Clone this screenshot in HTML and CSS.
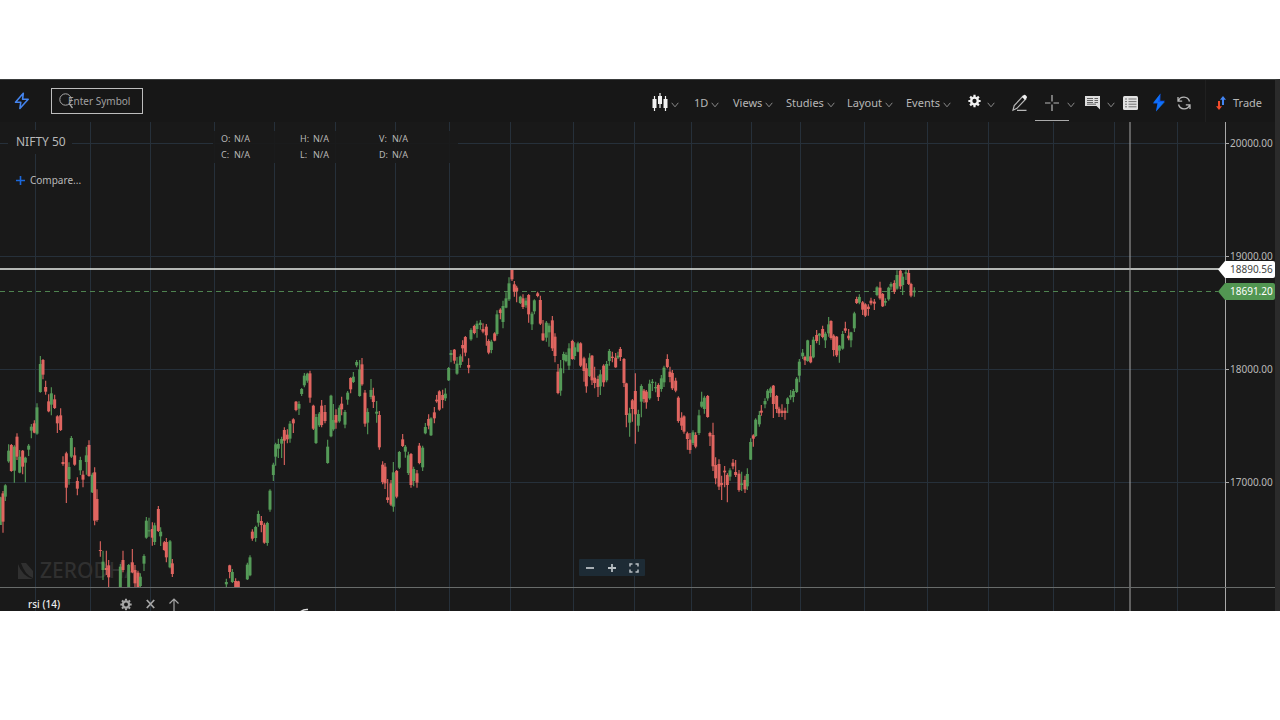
FILE: index.html
```html
<!DOCTYPE html>
<html lang="en">
<head>
<meta charset="utf-8">
<meta name="viewport" content="width=device-width, initial-scale=1">
<title>NIFTY 50 chart</title>
<link rel="stylesheet" href="styles.css">
</head>
<body>
<svg class="symbols" aria-hidden="true">
  <symbol id="chev" viewBox="0 0 8 6"><path d="M.7 .8 4 4.8 7.3 .8" fill="none" stroke="currentColor"/></symbol>
  <symbol id="gear" viewBox="0 0 14 14"><circle cx="7" cy="7" r="3.6" fill="none" stroke="currentColor" stroke-width="2.6"/><path d="M7 .4v2.2M7 11.4v2.2M.4 7h2.2M11.4 7h2.2M2.3 2.3l1.6 1.6M10.1 10.1l1.6 1.6M2.3 11.7l1.6-1.6M10.1 3.9l1.6-1.6" stroke="currentColor" stroke-width="2.4"/></symbol>
</svg>
<main class="app">
  <header class="toolbar">
    <button class="logo" aria-label="Home"><svg width="16" height="18" viewBox="0 0 16 18"><path d="M9.3 1.2 1.5 10.2h5.3l-.9 6.3L14.2 7.3H8.6z" fill="none" stroke="#4484ee" stroke-width="1.6" stroke-linejoin="round"/></svg></button>
    <label class="search">
      <svg width="16" height="18" viewBox="0 0 16 18"><circle cx="6.5" cy="7.5" r="5.7" fill="none" stroke="#aaa"/><path d="m10.5 11.8 3 4.2" stroke="#aaa" stroke-width="1.3"/></svg>
      <input type="text" placeholder="Enter Symbol" aria-label="Enter Symbol">
    </label>
    <nav class="tools">
      <button class="tool" aria-label="Chart style"><svg class="white" width="16" height="20" viewBox="0 0 16 20"><path d="M2.5 3v15M8 0v15M13.5 3v15" stroke="currentColor" stroke-width="1.2"/><path d="M.5 6h4v9h-4zM6 3h4v8H6zM11.5 6h4v9h-4z" fill="currentColor"/></svg><svg class="chev"><use href="#chev"/></svg></button>
      <button class="tool">1D<svg class="chev"><use href="#chev"/></svg></button>
      <button class="tool">Views<svg class="chev"><use href="#chev"/></svg></button>
      <button class="tool">Studies<svg class="chev"><use href="#chev"/></svg></button>
      <button class="tool">Layout<svg class="chev"><use href="#chev"/></svg></button>
      <button class="tool">Events<svg class="chev"><use href="#chev"/></svg></button>
      <button class="tool settings" aria-label="Settings"><svg class="white lifted" width="13" height="14"><use href="#gear"/></svg><svg class="chev"><use href="#chev"/></svg></button>
      <button class="tool" aria-label="Draw"><svg width="16" height="18" viewBox="0 0 16 18"><path d="M1 16.2 2.2 11.6 11 2.2l2.8 2.7-8.9 9.4zM5 16.3h9.5" fill="none" stroke="currentColor" stroke-width="1.2"/><path d="m10 3 1.8-2q.8-.6 1.6.1l1.4 1.5q.5.7-.1 1.4l-1.8 2z" fill="#eee"/></svg></button>
      <button class="tool cross" aria-label="Crosshair"><svg width="14" height="16" viewBox="0 0 14 16"><path d="M0 8h5.5M8.500 8H14M7 0v6.500M7 9.500V16" stroke="currentColor" stroke-width="1.2"/></svg><svg class="chev"><use href="#chev"/></svg></button>
      <button class="tool notes" aria-label="Notes"><svg width="15" height="15" viewBox="0 0 15 15"><path d="M0 1h15v13.500L11.500 11H0z" fill="#ddd"/><path d="M2 3.500h6M2 5.500h6M2 7.500h6M2 9.200h9M9.500 3.500H13M9.500 5.500H13M9.500 7.500H13" stroke="#444" stroke-width=".8"/></svg><svg class="chev"><use href="#chev"/></svg></button>
      <button class="tool" aria-label="Table"><svg width="15" height="14" viewBox="0 0 15 14"><rect width="15" height="14" rx="1.500" fill="#e2e2e2"/><path d="M2 3h2M2 5.600h2M2 8.200h2M2 10.800h2M5.500 3h8M5.500 5.600h8M5.500 8.200h8M5.500 10.800h8" stroke="#666" stroke-width=".9"/></svg></button>
      <button class="tool" aria-label="Signals"><svg width="12" height="19" viewBox="0 0 12 19"><path d="M7.500.5 0 10.500h4.300L3 18.500 12 7.800H7.300z" fill="#0b56ee"/><path d="M7.500.5 5 9h6.900L3 18.500l2-8.800H0z" fill="#1384ff" opacity=".6"/></svg></button>
      <button class="tool" aria-label="Refresh"><svg width="14" height="16" viewBox="0 0 14 16"><path d="M1 2v4.200h4.200M1.300 6A5.900 5.900 0 0 1 12.500 6.500M13 14V9.800H8.800M12.700 10A5.900 5.900 0 0 1 1.500 9.500" fill="none" stroke="currentColor" stroke-width="1.300"/></svg></button>
      <button class="tool trade"><svg width="10" height="14" viewBox="0 0 10 14"><path d="M7 0 10 3.800H8V9H6V3.800H4z" fill="#4385f4"/><path d="M3 14 0 10.200h2V5h2v5.200h2z" fill="#f24b2b"/></svg>Trade</button>
    </nav>
  </header>

  <section class="chart" aria-label="Price chart">
    <svg id="plot" class="plot" viewBox="0 122 1226 465" preserveAspectRatio="xMaxYMin slice">
      <g id="grid" class="grid"></g>
      <g class="mark"><path d="M18 563h8l7 8v7q-8-3-12-15zM18 564q4 12 15 15H18z"/><text x="40" y="578">ZERODHA</text></g>
      <path class="last" d="M0 291.500H1218"/>
      <g id="candles"></g>
      <path class="hair" d="M0 269H1219"/>
      <path class="hair vertical" d="M1130 122V587"/>
    </svg>
    <div class="title">
      <h1>NIFTY 50</h1>
      <button class="compare"><svg width="9" height="9" viewBox="0 0 9 9"><path d="M4.500 0v9M0 4.500h9" stroke="#1b68dc" stroke-width="1.600"/></svg>Compare...</button>
    </div>
    <dl class="quote">
      <div><dt>O:</dt><dd>N/A</dd></div><div><dt>H:</dt><dd>N/A</dd></div><div><dt>V:</dt><dd>N/A</dd></div>
      <div><dt>C:</dt><dd>N/A</dd></div><div><dt>L:</dt><dd>N/A</dd></div><div><dt>D:</dt><dd>N/A</dd></div>
    </dl>
    <div class="zoom">
      <button aria-label="Zoom out"><svg width="10" height="10"><path d="M1 5h8" stroke="currentColor" stroke-width="1.800"/></svg></button>
      <button aria-label="Zoom in"><svg width="10" height="10"><path d="M1 5h8M5 1v8" stroke="currentColor" stroke-width="1.800"/></svg></button>
      <button aria-label="Full screen"><svg width="10" height="10"><path d="M1 3.500V1h2.500M6.500 1H9v2.500M9 6.500V9H6.500M3.500 9H1V6.500" fill="none" stroke="currentColor" stroke-width="1.500"/></svg></button>
    </div>
    <div class="axis">
      <span>20000.00</span><span>19000.00</span><span>18000.00</span><span>17000.00</span>
    </div>
    <div class="tag cursor">18890.56</div>
    <div class="tag price">18691.20</div>
  </section>

  <section class="study" aria-label="RSI">
    <svg class="plot" viewBox="0 587 1226 23" preserveAspectRatio="xMaxYMin slice">
      <g id="grid2" class="grid"></g>
      <path class="hair vertical" d="M1130 587V611"/>
      <path d="M300 611q4-3 8-2.500" fill="none" stroke="#ddd" stroke-width="1.500"/>
    </svg>
    <div class="study-head">
      <h2>rsi (14)</h2>
      <button aria-label="Study settings"><svg width="12" height="13"><use href="#gear"/></svg></button>
      <button aria-label="Remove study"><svg width="9" height="10"><path d="m.8 1 7.400 8M8.200 1 .8 9" stroke="currentColor" stroke-width="1.800"/></svg></button>
      <button aria-label="Move study up"><svg width="10" height="13"><path d="M5 13V1M.5 5.500 5 1l4.500 4.500" fill="none" stroke="currentColor" stroke-width="1.200"/></svg></button>
    </div>
    <div class="axis"></div>
  </section>
</main>
<script src="chart.js"></script>
</body>
</html>
```
FILE: styles.css
```css
* { box-sizing: border-box; }
body {
  margin: 0;
  background: #fff;
  color: #b8b8b8;
  font: 11px/16px "Noto Sans", "Open Sans", sans-serif;
}
button {
  padding: 0;
  border: 0;
  background: none;
  color: inherit;
  font: inherit;
}
svg { display: block; flex: none; }
h1, h2, dl, dd { margin: 0; font-weight: 400; }
.symbols { position: absolute; width: 0; height: 0; }
.app {
  margin-top: 79px;
  background: #191919;
  border-top: 1px solid #3a3d3c;
  border-right: 5px solid #2b2b2b;
  overflow: hidden;
}
.toolbar {
  display: flex;
  align-items: center;
  height: 42px;
  padding: 0 14px;
  background: #171717;
}
.search {
  position: relative;
  margin-left: 21px;
}
.search svg { position: absolute; left: 8px; top: 4px; }
.search input {
  display: block;
  width: 92px;
  height: 26px;
  padding: 0 0 0 16px;
  border: 1px solid #bdbdbd;
  border-radius: 0;
  background: transparent;
  color: #a0a0a0;
  font: 10px/16px "Noto Sans", sans-serif;
}
.search input::placeholder { color: #a0a0a0; opacity: 1; }
.tools {
  display: grid;
  grid-template-columns: 42px 39px 53px 61px 59px 62px 44px 23px 50px 38px 30px 24px 28px 56px;
  align-self: stretch;
  margin-left: auto;
}
.tool {
  display: flex;
  align-items: center;
  gap: 3px;
  padding-top: 3px;
  white-space: nowrap;
}
.chev { width: 8px; height: 6px; margin-top: 5px; color: #888; }
.white { color: #f2f2f2; }
.lifted { margin-bottom: 4px; }
.settings { gap: 6px; }
.notes { gap: 7px; }
.cross {
  position: relative;
  gap: 8px;
  padding-left: 10px;
}
.cross::after {
  content: "";
  position: absolute;
  left: 0;
  bottom: 1px;
  width: 34px;
  height: 1px;
  background: #aaa;
}
.trade {
  gap: 7px;
  padding-left: 10px;
  border-left: 1px solid #202020;
}
.chart, .study {
  position: relative;
  display: grid;
  grid-template-columns: 1fr 50px;
}
.chart { height: 465px; }
.study { height: 24px; border-top: 1px solid #686b6a; }
.plot { width: calc(100% + 1px); height: 100%; min-width: 0; overflow: hidden; }
.grid path { stroke: #26303a; fill: none; }
.mark { fill: #303030; font: 500 21px "Noto Sans", sans-serif; }
.last { stroke: #4f8350; stroke-dasharray: 5 4; }
.hair { stroke: #e8ece8; stroke-width: 1.5; }
.vertical { stroke: #a8a8a8; stroke-width: 1; }
.up { stroke: #559b58; }
.down { stroke: #e06560; }
.wick { stroke-width: 1.1; }
.stem { stroke-width: 3; }
.title {
  position: absolute;
  left: 8px;
  top: 8px;
}
.title h1 {
  width: 64px;
  padding: 2px 0 2px 8px;
  background: #191919;
  font-size: 12px;
  line-height: 20px;
  white-space: nowrap;
}
.compare {
  display: flex;
  align-items: center;
  gap: 5px;
  padding: 18px 8px 0;
  font-size: 10px;
  line-height: 16px;
}
.quote {
  position: absolute;
  left: 213px;
  top: 9px;
  display: grid;
  grid-template-columns: repeat(3, 79px);
  padding-left: 8px;
  background: rgba(25, 25, 25, .9);
  font-size: 9px;
  line-height: 16px;
}
.quote div { display: flex; }
.quote dt { width: 13px; }
.zoom {
  position: absolute;
  left: calc(50% - 59px);
  bottom: 11px;
  display: grid;
  grid-template-columns: repeat(3, 22px);
  height: 17px;
  border-radius: 1px;
  background: #1d2b35;
  color: #b7bec2;
}
.zoom button { display: grid; place-items: center; }
.axis {
  border-left: 1px solid #a8a8a8;
  padding-top: 13px;
  font-size: 10px;
}
.axis span {
  display: flex;
  align-items: center;
  gap: 1px;
  height: 16px;
  margin-bottom: 97px;
}
.axis span::before { content: ""; width: 3px; height: 1px; background: #a8a8a8; }
.tag {
  position: absolute;
  right: 0;
  width: 57px;
  height: 17px;
  padding-left: 12px;
  border-radius: 2px;
  clip-path: polygon(0 50%, 7px 0, 100% 0, 100% 100%, 7px 100%);
  font-size: 10px;
  line-height: 17px;
}
.cursor { top: 139px; background: #fff; color: #444; }
.price { top: 161px; background: #529652; color: #fff; }
.study .axis { padding: 0; }
.study-head {
  position: absolute;
  left: 28px;
  top: 8px;
  display: grid;
  grid-template-columns: 92px 26px 23px 10px;
  color: #a6a6a6;
}
.study-head h2 { color: #eee; font-size: 10px; line-height: 16px; font-weight: 500; }
.study-head button { align-self: start; height: 16px; display: flex; align-items: center; }
```
FILE: chart.js
```js
// Vertical grid lines and price lines, in chart units.
const columns = [35, 90, 150, 214, 274, 335, 395, 449, 510, 573, 634, 691, 751, 800, 864, 927, 988, 1053, 1114, 1177];
const rows = [143, 256, 369, 482];
const vertical = columns.map(x => `M${x + 0.5} 122V611`).join('');
const horizontal = rows.map(y => `M0 ${y + 0.5}H1226`).join('');
document.getElementById('grid').innerHTML = `<path d="${vertical}${horizontal}"/>`;
document.getElementById('grid2').innerHTML = `<path d="${vertical}"/>`;

// Each bar: direction, x, high, low, body top, body bottom; three steps to a unit.
const segments = [
  { x: 0, y: 340, bars: `g 1 470 555 472 555,r 9 453 578 460 545,g 16 433 483 436 470,g 26 313 368 332 364,r 34 312 395 315 393,g 43 316 428 320 392,r 51 280 360 290 350,g 59 330 400 350 398,r 68 330 403 332 380,g 76 350 427 353 368,g 86 312 348 317 329,g 94 252 295 260 272,r 103 241 280 250 278,g 111 190 284 202 281,g 121 48 158 72 156,r 129 57 118 60 104,r 137 122 164 141 155,r 146 163 217 184 214,g 154 142 226 160 194,r 164 164 207 178 204,r 172 226 279 229 250,r 182 205 273 226 270,r 189 349 377 366 372,r 199 335 489 340 443,g 207 367 434 381 417,g 214 288 354 294 350,r 224 322 377 346 374,r 232 412 466 423 446,g 241 350 405 360 391,r 249 392 442 404 419,g 259 320 404 346 366,r 267 301 410 315 408,g 277 398 459 404 457,r 284 382 556 397 542,r 291 448 545 477 540,r 301 604 650 630 633,g 309 632 720 665 690,r 319 632 705 684 690,r 326 660 741 676 712,g 361 672 741 680 741,r 369 632 697 660 690,g 386 672 741 675 741,r 397 627 700 667 697,r 405 675 741 690 730,r 414 692 741 698 741,g 421 700 741 710 738,g 432 643 693 648 671,g 439 531 596 542 593,g 447 533 590 571 574,r 457 547 617 567 593,g 464 548 615 556 606,r 475 498 576 507 573,g 482 562 618 575 589,r 493 603 632 607 630,r 499 594 667 606 652,g 510 600 685 604 682,r 517 657 711 670 702` },
  { x: 200, y: 340, bars: `g 79 716 741 726 733,r 89 674 715 676 696,g 97 687 729 696 726,r 107 715 741 723 741,r 115 722 741 724 741,g 142 668 720 674 718,g 150 646 709 652 706,r 157 568 602 575 596,g 167 557 605 561 594,g 175 512 560 522 548,r 184 528 577 543 555,r 193 548 611 554 608,g 202 545 617 549 609,g 210 448 515 452 509,g 220 368 423 374 405,g 227 308 377 313 350,g 235 296 354 312 326,g 245 290 354 297 311,r 253 262 375 270 302,r 262 268 310 284 298,g 270 243 308 251 296,r 280 235 279 238 250,r 288 183 214 185 210,g 297 184 225 192 206,g 305 144 168 147 162,g 313 99 142 107 136,g 322 98 128 101 122,r 330 92 188 100 173,r 340 194 270 197 266,g 348 222 312 231 309,g 358 216 261 221 256,r 365 180 262 197 255,r 375 195 250 216 243,g 383 299 371 320 369,g 393 164 292 167 289,g 400 192 272 240 268,r 408 208 266 225 248,g 418 196 248 203 244,r 425 170 226 191 208,g 435 210 265 216 254,g 443 153 194 158 179,r 452 112 160 114 148,g 460 96 129 110 126,g 470 60 82 66 76,g 479 60 170 88 168,r 486 54 137 73 133,r 495 150 260 158 251,g 503 205 283 216 248,g 513 117 178 150 171,r 520 143 204 167 186,g 530 183 248 215 221,r 538 213 329 225 322,r 548 364 433 374 426,r 555 369 447 380 430,r 563 417 488 472 480,r 573 420 498 430 494,g 580 366 515 397 500,r 590 390 475 393 470` },
  { x: 370, y: 255, bars: `g 88 588 642 591 638,r 98 537 576 553 573,g 106 570 608 575 590,g 115 590 660 601 654,r 123 594 698 597 690,g 131 635 694 642 678,r 141 645 698 655 683,r 148 564 628 572 624,g 158 572 648 578 637,g 166 504 538 516 535,r 176 478 523 492 512,g 183 487 543 490 541,r 193 456 505 472 490,r 200 420 443 434 439,r 208 406 467 409 464,r 218 404 460 420 435,g 226 400 438 416 430,g 236 336 378 339 376,g 243 285 322 294 300,r 253 282 326 284 317,g 261 306 359 326 356,g 271 298 338 304 330,r 278 256 320 270 280,r 286 243 304 246 293,r 296 310 355 330 338,g 303 220 257 225 253,r 313 209 238 213 234,g 321 197 248 206 222,g 331 195 224 203 210,r 339 205 235 222 230,r 349 207 272 215 241,r 356 253 298 258 293,g 364 254 295 260 285,r 374 232 259 235 257,g 381 166 242 178 237,r 391 160 193 164 174,g 399 137 220 153 201,g 408 112 160 130 158,g 417 67 138 85 133,r 426 44 78 45 73,r 433 78 125 88 110,r 440 92 142 98 108,g 451 122 147 125 144,r 459 118 162 130 156,g 468 128 158 137 151,r 476 117 203 120 178,g 486 170 225 176 208,g 493 133 178 136 169,r 503 110 127 115 123,r 511 122 210 135 206` },
  { x: 530, y: 255, bars: `r 39 195 258 235 256,g 49 198 260 203 248,g 57 205 275 212 232,r 67 183 288 196 280,r 75 235 322 245 303,r 84 327 418 350 414,g 92 315 422 340 407,g 101 290 355 297 315,g 108 292 322 300 318,g 117 265 345 280 332,r 127 254 314 258 312,g 134 262 314 277 303,g 144 260 292 265 290,r 152 262 336 265 332,r 162 305 380 310 348,r 169 325 413 340 394,g 179 295 366 308 363,r 186 300 390 302 376,r 194 335 400 368 384,r 204 362 426 372 396,g 211 345 420 358 394,r 221 328 395 332 382,g 230 318 382 327 376,g 238 282 332 288 318,r 247 290 322 305 309,r 257 294 338 308 337,g 264 290 312 302 308,r 271 276 318 282 306,r 282 309 396 312 384,r 289 383 517 385 480,g 299 458 545 475 503,r 307 432 500 436 462,r 316 355 566 408 478,g 325 464 530 477 512,g 334 388 487 393 440,r 342 402 443 407 432,r 349 405 461 410 442,g 359 374 434 386 430,g 367 372 408 380 384,g 377 380 412 396 400,r 385 385 438 390 426,g 394 360 410 370 402,g 402 332 396 338 382,r 412 298 340 312 336,r 420 335 382 350 366,r 427 345 405 354 400,r 437 368 412 377 407,r 445 424 503 428 498,r 455 472 525 488 512,r 462 481 536 484 530,r 472 530 584 535 552,r 480 534 596 554 585,g 489 526 570 532 564,r 497 532 580 540 575,g 507 464 540 481 534` },
  { x: 690, y: 255, bars: `g 35 410 458 440 455,g 43 422 476 428 462,r 53 420 488 423 486,r 60 530 573 534 544,r 69 503 648 540 634,r 77 607 688 630 670,r 87 613 705 627 695,r 95 662 735 684 690,r 104 633 697 647 652,r 112 655 742 660 690,g 120 640 677 646 665,r 129 612 643 623 634,r 137 615 666 651 660,r 147 645 710 656 705,g 155 650 708 685 690,r 165 662 714 675 703,g 172 640 705 657 694,g 182 550 615 561 614,r 190 538 575 541 551,g 197 490 546 494 543,g 208 468 515 480 508,r 214 450 482 467 473,g 225 430 460 438 448,g 233 402 437 407 430,g 242 395 427 400 414,r 250 390 489 392 447,r 260 420 474 423 462,r 267 455 486 461 475,r 276 448 486 467 474,r 285 458 494 467 474,g 293 427 474 430 447,g 302 405 434 421 427,g 310 402 442 408 426,g 320 366 414 371 411,g 328 312 382 320 362,g 338 282 312 293 304,r 345 302 330 306 316,g 353 254 320 256 318,r 362 270 325 304 322,g 370 245 310 254 307,r 380 225 265 240 258,g 388 234 270 236 242,r 398 212 250 222 246,g 406 230 279 236 256,g 416 186 245 208 235,r 423 196 254 198 249,r 431 238 304 242 285,r 440 243 306 245 301,g 448 270 323 272 287,g 458 228 284 237 281,r 466 200 234 220 227,r 476 222 256 242 250,g 483 230 277 232 256,g 493 170 231 175 220,r 500 125 147 132 144,g 508 118 148 126 143,r 518 138 180 142 164,r 526 145 186 148 182,r 535 148 182 155 162,r 543 128 151 137 145,r 553 132 165 140 146,g 561 94 124 97 120,r 570 80 134 98 130,r 578 114 156 117 154,g 586 130 152 138 143,g 596 95 137 98 133,g 603 82 104 87 95,r 613 76 117 84 110,g 621 46 104 60 101,r 631 44 103 47 94,g 638 55 120 65 90,g 648 45 75 52 56,r 656 44 90 54 87,r 663 83 127 87 122,g 673 97 125 107 112` }
];

const out = [];
for (const segment of segments) {
  for (const bar of segment.bars.split(',')) {
    const [dir, ...values] = bar.split(' ');
    const [x, high, low, top, bottom] = values.map(Number);
    const px = segment.x + x / 3;
    const py = v => segment.y + v / 3;
    const tone = dir === 'g' ? 'up' : 'down';
    out.push(`<path class="${tone} wick" d="M${px} ${py(high)}V${py(low)}"/><path class="${tone} stem" d="M${px} ${py(top)}V${py(bottom)}"/>`);
  }
}
document.getElementById('candles').innerHTML = out.join('');
```
